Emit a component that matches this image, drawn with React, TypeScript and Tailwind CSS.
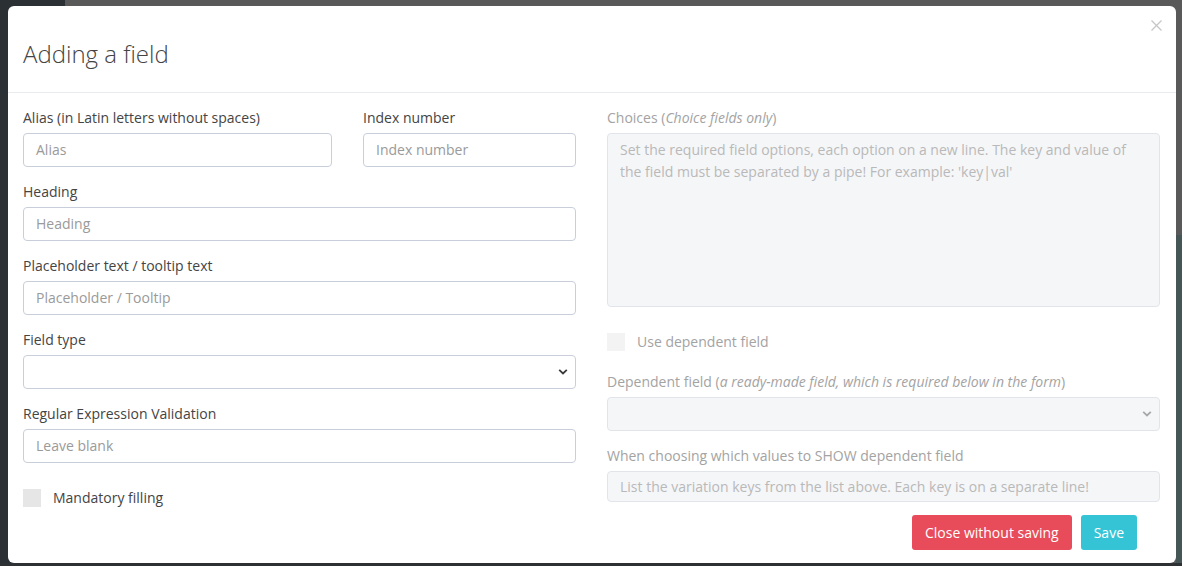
import React from "react";

const font = { fontFamily: '"Open Sans", "Noto Sans", sans-serif' };

function Chevron({ light }: { light?: boolean }) {
  return (
    <svg width="10" height="7" viewBox="0 0 10 7" className="absolute right-[7px] top-1/2 -translate-y-1/2">
      <path d="M1.2 1.4 L5 5 L8.8 1.4" fill="none" stroke={light ? "#a8a8a8" : "#3a3a3a"} strokeWidth="1.8" />
    </svg>
  );
}

function Label({ children, disabled }: { children: React.ReactNode; disabled?: boolean }) {
  return (
    <div className={`text-[14px] leading-5 mb-[5px] ${disabled ? "text-[#a3a3a3]" : "text-[#444]"}`}>{children}</div>
  );
}

function Input({ placeholder, className = "" }: { placeholder?: string; className?: string }) {
  return (
    <div className={`h-[34px] rounded-[4px] border border-[#c8cfdb] bg-white flex items-center px-3 pb-[1px] text-[14px] text-[#9a9a9a] ${className}`}>
      {placeholder}
    </div>
  );
}

export default function App() {
  return (
    <div className="relative w-[1182px] h-[566px] overflow-hidden bg-[#595959]" style={font}>
      <div className="absolute left-0 top-0 w-[65px] h-full bg-[#2b3035]" />
      <div className="absolute left-[1176px] top-[235px] w-[6px] h-[331px] bg-[#465555]" />
      <div className="absolute left-0 top-[563px] w-full h-[3px] bg-[#2d3134]" />
      <div className="absolute left-[8px] top-[6px] w-[1168px] h-[557px] bg-white rounded-[6px] flex flex-col">
        <div className="h-[87px] border-b border-[#e9ecef] px-[15px] pt-[33px] relative">
          <h1 className="text-[24px] leading-[30px] font-light text-[#444]">Adding a field</h1>
          <svg width="11" height="11" viewBox="0 0 11 11" className="absolute right-[14px] top-[14px]">
            <path d="M0.5 0.5 L10.5 10.5 M10.5 0.5 L0.5 10.5" stroke="#c6c6c6" strokeWidth="1.3" />
          </svg>
        </div>
        <div className="grid grid-cols-[553px_553px] gap-x-[31px] px-[15px] pt-[15px]">
          {/* Left column */}
          <div className="flex flex-col">
            <div className="flex gap-[31px]">
              <div className="w-[309px]">
                <Label>Alias (in Latin letters without spaces)</Label>
                <Input placeholder="Alias" />
              </div>
              <div className="flex-1">
                <Label>Index number</Label>
                <Input placeholder="Index number" />
              </div>
            </div>
            <div className="mt-[15px]">
              <Label>Heading</Label>
              <Input placeholder="Heading" />
            </div>
            <div className="mt-[15px]">
              <Label>Placeholder text / tooltip text</Label>
              <Input placeholder="Placeholder / Tooltip" />
            </div>
            <div className="mt-[15px]">
              <Label>Field type</Label>
              <div className="relative h-[34px] rounded-[4px] border border-[#c8cfdb] bg-white">
                <Chevron />
              </div>
            </div>
            <div className="mt-[15px]">
              <Label>Regular Expression Validation</Label>
              <Input placeholder="Leave blank" />
            </div>
            <div className="mt-[25px] flex items-center gap-[12px]">
              <div className="w-[18px] h-[18px] bg-[#e6e6e6]" />
              <span className="text-[14px] text-[#444] leading-5">Mandatory filling</span>
            </div>
          </div>
          {/* Right column */}
          <div className="flex flex-col">
            <Label disabled>
              Choices (<i>Choice fields only</i>)
            </Label>
            <div className="h-[174px] rounded-[4px] border border-[#e1e5ea] bg-[#f5f6f8] px-3 py-[5px] text-[14px] leading-[22px] text-[#b9b9b9]">
              Set the required field options, each option on a new line. The key and value of the field must be separated by a pipe! For example: 'key|val'
            </div>
            <div className="mt-[25px] flex items-center gap-[12px]">
              <div className="w-[18px] h-[18px] bg-[#f3f3f3]" />
              <span className="text-[14px] text-[#a3a3a3] leading-5">Use dependent field</span>
            </div>
            <div className="mt-[20px]">
              <Label disabled>
                Dependent field (<i>a ready-made field, which is required below in the form</i>)
              </Label>
              <div className="relative h-[34px] rounded-[4px] border border-[#e1e5ea] bg-[#f5f6f8]">
                <Chevron light />
              </div>
            </div>
            <div className="mt-[15px]">
              <Label disabled>When choosing which values to SHOW dependent field</Label>
              <div className="h-[31px] rounded-[4px] border border-[#e1e5ea] bg-[#f5f6f8] px-3 flex items-center text-[14px] text-[#b9b9b9]">
                List the variation keys from the list above. Each key is on a separate line!
              </div>
            </div>
            <div className="mt-[13px] flex justify-end gap-[9px] pr-[23px]">
              <button className="h-[35px] px-[13px] rounded-[3px] bg-[#e84c5a] text-white text-[14px]">Close without saving</button>
              <button className="h-[35px] px-[13px] rounded-[3px] bg-[#34c4d6] text-white text-[14px]">Save</button>
            </div>
          </div>
        </div>
      </div>
    </div>
  );
}
